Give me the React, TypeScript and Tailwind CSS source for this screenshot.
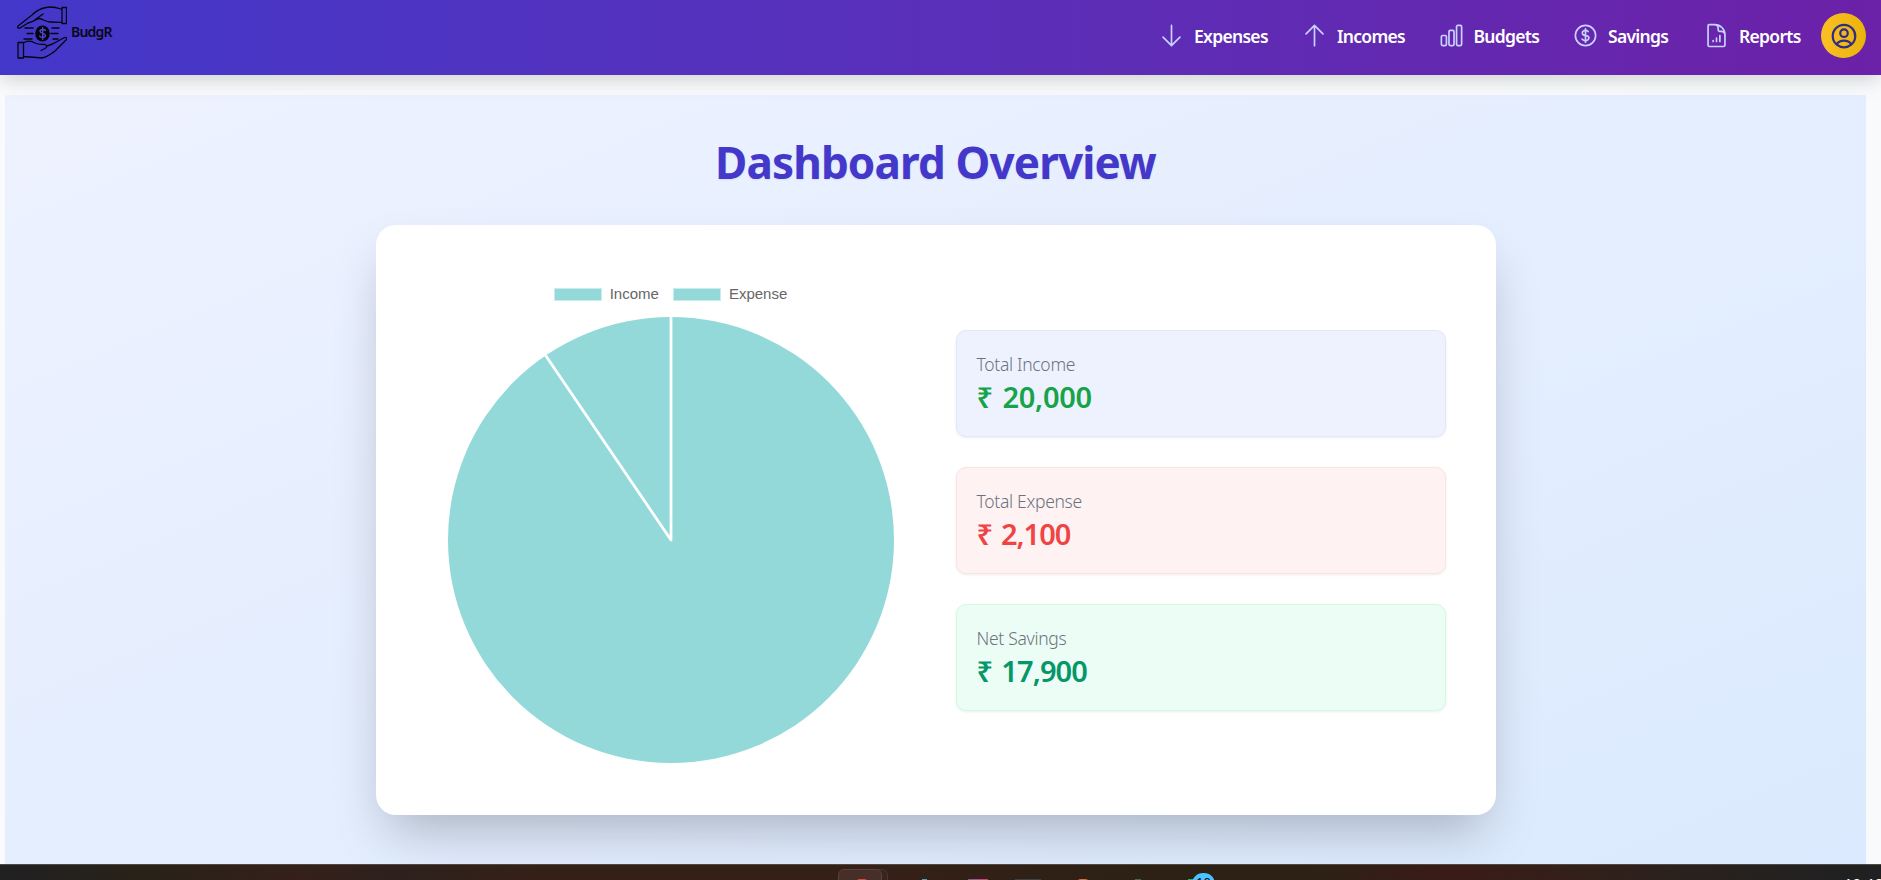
import React from "react";
import {
  HiOutlineArrowDown,
  HiOutlineArrowUp,
  HiOutlineChartBar,
  HiOutlineCurrencyDollar,
  HiOutlineUserCircle,
} from "react-icons/hi2";

function ReportIcon({ className }: { className?: string }) {
  return (
    <svg viewBox="0 0 24 24" fill="none" stroke="currentColor" strokeWidth="1.5" strokeLinecap="round" strokeLinejoin="round" className={className}>
      <path d="M19.5 14.25v-2.625a3.375 3.375 0 0 0-3.375-3.375h-1.5A1.125 1.125 0 0 1 13.5 7.125v-1.5a3.375 3.375 0 0 0-3.375-3.375H8.25M9 16.5v.75m3-3v3M15 12v5.25m-4.5-15H5.625c-.621 0-1.125.504-1.125 1.125v17.25c0 .621.504 1.125 1.125 1.125h12.75c.621 0 1.125-.504 1.125-1.125V11.25a9 9 0 0 0-9-9Z" />
    </svg>
  );
}

const links = [
  { label: "Expenses", icon: HiOutlineArrowDown, text: "w-[73px]", gap: "mr-[34px]" },
  { label: "Incomes", icon: HiOutlineArrowUp, text: "w-[66.5px]", gap: "mr-[34px]" },
  { label: "Budgets", icon: HiOutlineChartBar, text: "w-[64.5px]", gap: "mr-[34px]" },
  { label: "Savings", icon: HiOutlineCurrencyDollar, text: "w-[61px]", gap: "mr-[34px]" },
  { label: "Reports", icon: ReportIcon, text: "w-[63px]", gap: "mr-[19px]" },
];

const stats = [
  { label: "Total Income", value: "₹ 20,000", box: "border-[#e0e7ff] bg-[#eef2ff]", color: "text-[#16a34a] tracking-[-0.3px]" },
  { label: "Total Expense", value: "₹ 2,100", box: "border-[#fee2e2] bg-[#fef2f2]", color: "text-[#ef4444] tracking-[-1.05px]" },
  { label: "Net Savings", value: "₹ 17,900", box: "border-[#d1fae5] bg-[#ecfdf5]", color: "text-[#059669] tracking-[-0.9px]" },
];

function Logo() {
  return (
    <svg viewBox="0 0 50 54" className="h-[54px] w-[50px]" fill="none" stroke="#050510" strokeWidth="1.3" strokeLinejoin="round" strokeLinecap="round">
      <path d="M45 2.500h4.500v16H45zM44 4C38 2 33 1.500 29 2.500 24 3.500 19 6 15 10L1 21c-1 1.500.5 3 2.500 1.700L11 18c4-1 8-3 11-4.500 4 .5 7 3.500 11 3.500l11 .3M26 9l-9 6.500" />
      <path d="M1 37.500h5.500v15.500H1zM7 37.500c4-2 8-1.500 11 .5 4 2 7 1 10 1.500 3 1 2 3.200-1 4.500l-3 1.500M30 41c4-1 8-3 11-5l6.500-3.500c2-.7 3 1 1.500 2.500L38 46c-5 4-8 6-13 7-7-.5-12-1-18-1.500" />
      <path d="M8 23h8M10 28.500h6M7 34h8M35 23h7M34 28.500h7M36 34h5" strokeWidth="1.400" />
      <ellipse cx="25.500" cy="28.500" rx="7.300" ry="8" fill="#050510" stroke="none" />
      <path d="M28.500 25.500c-1-1.500-5.500-1.500-5.500.8 0 2.600 5.500 1.700 5.500 4.300 0 2.200-4.500 2.300-5.800.5M25.700 22.800v11.400" stroke="#5145cc" strokeWidth="1.400" />
    </svg>
  );
}

function Navbar() {
  return (
    <nav className="relative z-10 flex h-[75px] shrink-0 items-center justify-between bg-gradient-to-r from-[#4338ca] to-[#6b21a8] pr-[15px] pb-1 pl-[17px] shadow-[0_10px_20px_-3px_rgba(0,0,0,0.1),0_4px_14px_rgba(0,0,0,0.06)]">
      <div className="flex items-center pb-[7px]">
        <Logo />
        <svg width="50" height="24" className="ml-[3px] overflow-visible">
          <text x="1" y="17" fontSize="14" fontWeight="600" textLength="41.500" fill="#08081a" fontFamily="Noto Sans, sans-serif">BudgR</text>
        </svg>
      </div>
      <div className="flex items-center">
        {links.map(({ label, icon: Icon, text, gap }) => (
          <a key={label} className={`flex items-center ${gap}`}>
            <Icon className="mr-[9px] size-[27px] text-[#c7d2fe]" />
            <span className={`${text} pt-0.5 text-[17.500px] font-semibold tracking-[-0.700px] whitespace-nowrap text-white`}>{label}</span>
          </a>
        ))}
        <button className="flex size-[45px] items-center justify-center rounded-full bg-gradient-to-r from-[#fbbf24] to-[#eab308]">
          <HiOutlineUserCircle className="size-[30px] text-[#312e81]" strokeWidth={1.8} />
        </button>
      </div>
    </nav>
  );
}

function Pie() {
  const r = 223;
  const angle = (2100 / 22100) * Math.PI * 2;
  const x = r - r * Math.sin(angle);
  const y = r - r * Math.cos(angle);
  return (
    <div className="flex w-[490px] flex-col items-center">
      <div className="flex h-5 items-center gap-[14px] font-['Liberation_Sans',sans-serif] text-[15px] text-[#666]">
        <span className="flex items-center gap-2"><i className="h-[13px] w-12 border border-[#c9ecec] bg-[#93d9d9]" />Income</span>
        <span className="flex items-center gap-2"><i className="h-[13px] w-12 border border-[#c9ecec] bg-[#93d9d9]" />Expense</span>
      </div>
      <svg viewBox="0 0 446 446" className="mt-[13px] size-[446px]">
        <circle cx={r} cy={r} r={r} fill="#93d9d9" />
        <path d={`M${r} 0V${r}L${x} ${y}`} stroke="white" strokeWidth="2.800" fill="none" strokeLinejoin="round" />
      </svg>
    </div>
  );
}

function Taskbar() {
  return (
    <footer className="relative h-4 shrink-0 overflow-hidden border-t border-[#504a43] bg-[linear-gradient(90deg,#202022_0%,#282219_7%,#35201a_16%,#2e211d_21%,#352017_29%,#352017_46%,#2d2116_60%,#2d2116_70%,#3b1b17_77%,#33201a_84%,#252220_93%,#202022_100%)]">
      <div className="absolute top-1 left-[842px] h-6 w-[46px] rounded-md border border-[#4a352e] bg-[#38241f]" />
      <div className="absolute top-1 left-[838px] h-6 w-11 rounded-md border border-[#594039] bg-[#482e29]" />
      <div className="absolute top-[14px] left-[856px] h-2 w-3 rounded-full bg-[#e24a35]" />
      <div className="absolute top-[14px] left-[922px] h-2 w-[5px] bg-[#38a9ce]" />
      <div className="absolute top-[14px] left-[968px] h-2 w-5 bg-gradient-to-r from-[#8950ad] to-[#e6336a]" />
      <div className="absolute top-[14px] left-[1015px] h-2 w-[26px] bg-[#3b4248]" />
      <div className="absolute top-[14px] left-[1077px] h-2 w-3 rounded-full bg-[#df693b]" />
      <div className="absolute top-[14px] left-[1135px] h-2 w-[6px] bg-[#476848]" />
      <div className="absolute top-[14px] left-[1188px] h-2 w-3 bg-[#25ad63]" />
      <div className="absolute top-2 left-[1192px] flex h-[22px] w-[23px] justify-center rounded-full bg-[#4cc2ff] pt-[3px] text-[13px] leading-none text-black">10</div>
      <div className="absolute top-[11px] left-[1844px] text-[15px] leading-none whitespace-nowrap text-white">10:46</div>
    </footer>
  );
}

export default function App() {
  return (
    <div className="flex h-[880px] w-full flex-col overflow-hidden bg-[#f9fafb] font-['Noto_Sans',sans-serif]">
      <Navbar />
      <main className="mt-5 mr-[15px] ml-[5px] flex min-h-0 flex-1 flex-col items-center overflow-hidden bg-gradient-to-br from-[#eef2ff] to-[#dbeafe]">
        <h1 className="mt-[42px] flex h-[50px] items-center text-[44px] font-bold tracking-[-0.850px] whitespace-nowrap text-[#4338ca] [text-shadow:0_1px_2px_rgba(0,0,0,0.08)]">Dashboard Overview</h1>
        <section className="mt-[38px] flex h-[590px] w-[1120px] shrink-0 justify-between rounded-[20px] bg-white px-[50px] pt-[59px] shadow-[0_26px_52px_-12px_rgba(0,0,0,0.25)]">
          <Pie />
          <div className="mt-[46px] flex w-[490px] flex-col gap-[30px]">
            {stats.map((s) => (
              <div key={s.label} className={`h-[107px] rounded-[10px] border px-5 pt-[19px] shadow-[0_1px_3px_rgba(0,0,0,0.07)] ${s.box}`}>
                <p className="text-[17.500px] leading-7 font-[350] tracking-[-0.300px] text-[#6b7280]">{s.label}</p>
                <p className={`text-[29px] leading-[38px] font-semibold [word-spacing:2.5px] ${s.color}`}>{s.value}</p>
              </div>
            ))}
          </div>
        </section>
      </main>
      <Taskbar />
    </div>
  );
}
